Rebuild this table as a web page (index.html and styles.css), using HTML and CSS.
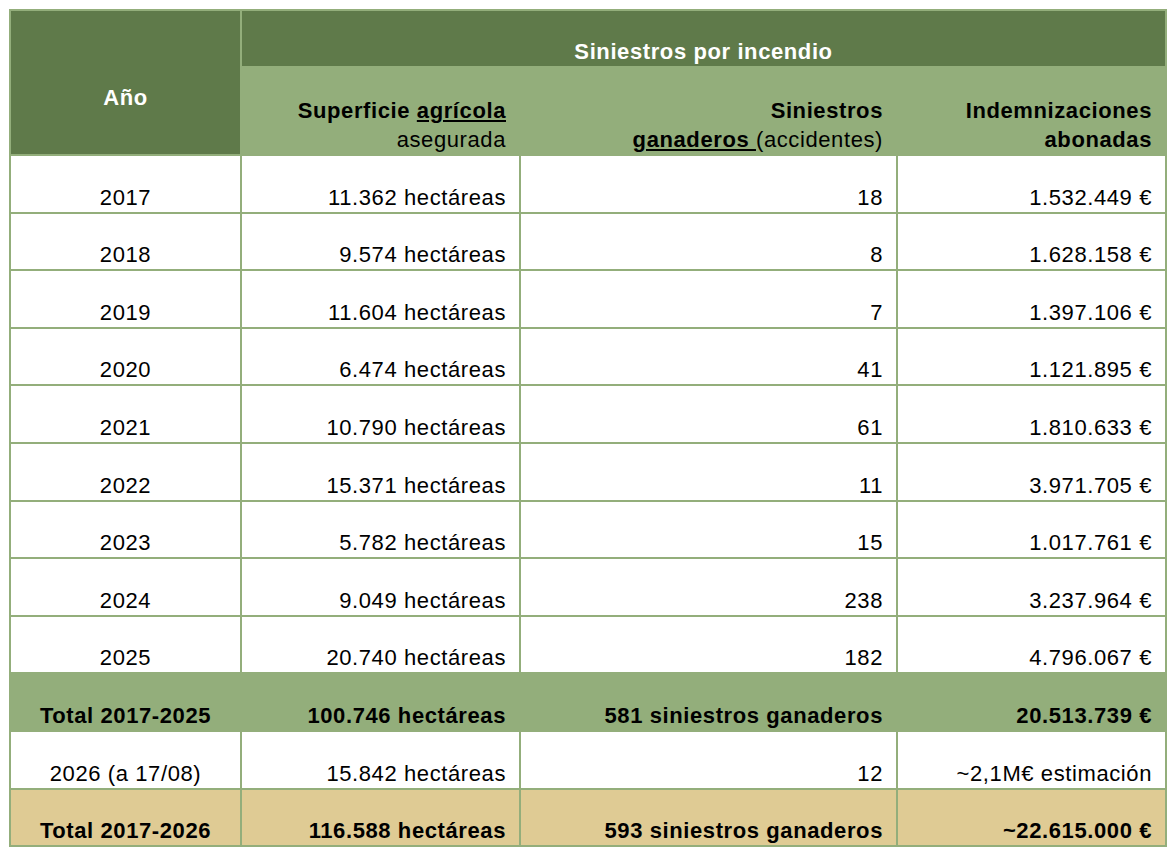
FILE: index.html
```html
<!DOCTYPE html>
<html lang="es">
<head>
<meta charset="utf-8">
<title>Siniestros por incendio</title>
<link rel="stylesheet" href="styles.css">
</head>
<body>
<table class="fire-table">
  <colgroup>
    <col class="col-year">
    <col class="col-area">
    <col class="col-count">
    <col class="col-amount">
  </colgroup>
  <thead>
    <tr class="row-group">
      <th rowspan="2" class="cell-dark cell-year-head">Año</th>
      <th colspan="3" class="cell-dark cell-group-head">Siniestros por incendio</th>
    </tr>
    <tr class="row-sub">
      <th class="cell-light num"><strong>Superficie <u>agrícola</u></strong><br><span class="regular">asegurada</span></th>
      <th class="cell-light num"><strong>Siniestros</strong><br><strong><u>ganaderos </u></strong><span class="regular">(accidentes)</span></th>
      <th class="cell-light num"><strong>Indemnizaciones<br>abonadas</strong></th>
    </tr>
  </thead>
  <tbody>
    <tr><td class="year">2017</td><td class="num">11.362 hectáreas</td><td class="num">18</td><td class="num">1.532.449 €</td></tr>
    <tr><td class="year">2018</td><td class="num">9.574 hectáreas</td><td class="num">8</td><td class="num">1.628.158 €</td></tr>
    <tr><td class="year">2019</td><td class="num">11.604 hectáreas</td><td class="num">7</td><td class="num">1.397.106 €</td></tr>
    <tr><td class="year">2020</td><td class="num">6.474 hectáreas</td><td class="num">41</td><td class="num">1.121.895 €</td></tr>
    <tr><td class="year">2021</td><td class="num">10.790 hectáreas</td><td class="num">61</td><td class="num">1.810.633 €</td></tr>
    <tr><td class="year">2022</td><td class="num">15.371 hectáreas</td><td class="num">11</td><td class="num">3.971.705 €</td></tr>
    <tr><td class="year">2023</td><td class="num">5.782 hectáreas</td><td class="num">15</td><td class="num">1.017.761 €</td></tr>
    <tr><td class="year">2024</td><td class="num">9.049 hectáreas</td><td class="num">238</td><td class="num">3.237.964 €</td></tr>
    <tr><td class="year">2025</td><td class="num">20.740 hectáreas</td><td class="num">182</td><td class="num">4.796.067 €</td></tr>
    <tr class="row-total-green"><td class="year">Total 2017-2025</td><td class="num">100.746 hectáreas</td><td class="num">581 siniestros ganaderos</td><td class="num">20.513.739 €</td></tr>
    <tr><td class="year">2026 (a 17/08)</td><td class="num">15.842 hectáreas</td><td class="num">12</td><td class="num">~2,1M€ estimación</td></tr>
    <tr class="row-total-tan"><td class="year">Total 2017-2026</td><td class="num">116.588 hectáreas</td><td class="num">593 siniestros ganaderos</td><td class="num">~22.615.000 €</td></tr>
  </tbody>
</table>
</body>
</html>
```

FILE: styles.css
```css
html, body {
  margin: 0;
  padding: 0;
  background: #ffffff;
}

body {
  font-family: "Liberation Sans", Arial, sans-serif;
  color: #000000;
}

.fire-table {
  border-collapse: collapse;
  table-layout: fixed;
  width: 1158px;
  margin: 9px 0 0 9px;
  font-size: 22px;
  line-height: 29px;
  letter-spacing: 0.6px;
}

.col-year { width: 231px; }
.col-area { width: 279px; }
.col-count { width: 377px; }
.col-amount { width: 269px; }

.fire-table th,
.fire-table td {
  border: 2px solid #93ae7b;
  padding: 0 13px;
  vertical-align: bottom;
  font-weight: normal;
}

.fire-table tbody tr {
  height: 57.6px;
}

.row-group { height: 57px; }
.row-sub { height: 88px; }

.cell-dark {
  background: #5f7a4a;
  color: #ffffff;
  font-weight: bold !important;
}

.cell-year-head {
  text-align: center;
  vertical-align: middle !important;
  padding-top: 29px !important;
}

.cell-group-head {
  text-align: center;
  padding-bottom: 0 !important;
}

.cell-light {
  background: #93ae7b;
}

.regular {
  font-weight: normal;
}

.year {
  text-align: center;
}

.num {
  text-align: right;
}

.row-total-green td {
  background: #93ae7b;
  font-weight: bold;
}

.row-total-tan td {
  background: #dfcb94;
  font-weight: bold;
}
```
